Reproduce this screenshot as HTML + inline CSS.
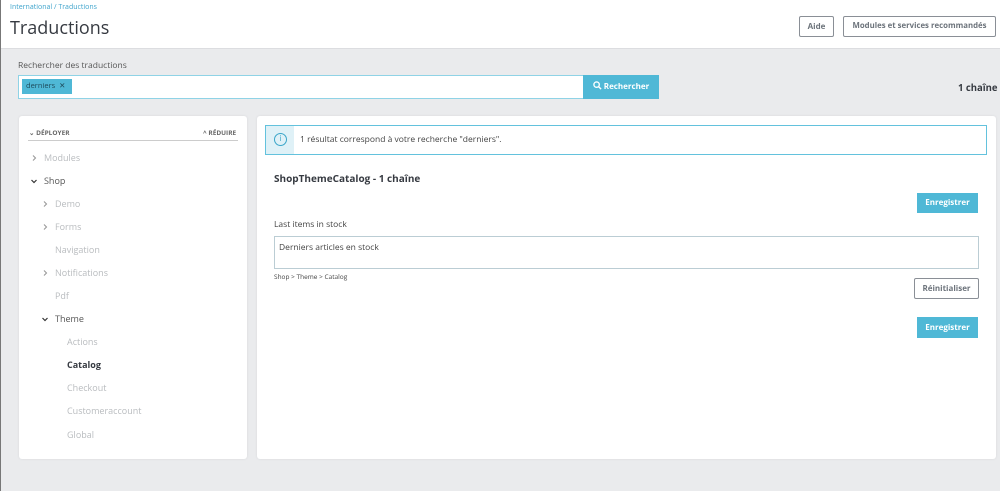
<!DOCTYPE html>
<html><head><meta charset="utf-8"><style>
*{box-sizing:border-box;margin:0;padding:0}
body{width:1000px;height:491px;background:#eaebed;font-family:"Open Sans","Liberation Sans",sans-serif;color:#363a41;position:relative;overflow:hidden;font-size:9px}
.a{position:absolute}
.hdr{left:0;top:0;width:1000px;height:49px;background:#fff;border-bottom:1px solid #dcdde0}
.edge{left:0;top:0;width:1px;height:491px;background:#777}
.btn{position:absolute;border:1px solid #8a8f96;border-radius:2px;background:#fff;color:#6c737b;font-weight:bold;font-size:8px;text-align:center;white-space:nowrap}
.blue{position:absolute;background:#4fb8d6;color:#fff;font-weight:bold;font-size:8px;text-align:center}
.panel{background:#fff;border-radius:3px;box-shadow:0 0 2px #d6d7da}
.t{position:absolute;color:#b9bcbf;font-size:9px;white-space:nowrap}
svg.c{position:absolute;width:6px;height:6px}
</style></head><body>
<div class="a hdr"></div>
<div class="a edge"></div>
<div class="a" style="left:10px;top:3px;color:#3fa4cc;font-size:7px">International / Traductions</div>
<div class="a" style="left:10px;top:16px;font-size:18px;color:#363a41">Traductions</div>
<div class="btn" style="left:799px;top:16px;width:35px;height:21px;line-height:19px">Aide</div>
<div class="btn" style="left:843px;top:16px;width:153px;height:21px;line-height:19px;font-size:7.8px">Modules et services recommandés</div>

<div class="a" style="left:18px;top:60px;font-size:8.5px;color:#555">Rechercher des traductions</div>
<div class="a" style="left:18px;top:75px;width:566px;height:24px;background:#fff;border:1px solid #8fd3e6"></div>
<div class="a" style="left:22px;top:79px;width:50px;height:15px;background:#4fb8d6;color:#1e4a5a;font-size:7.5px;line-height:15px;padding-left:4px">derniers &nbsp;✕</div>
<div class="blue" style="left:583px;top:75px;width:76px;height:24px;line-height:24px"><svg width="9" height="9" viewBox="0 0 10 10" style="vertical-align:-1px"><circle cx="4" cy="4" r="3" fill="none" stroke="#fff" stroke-width="1.5"/><path d="M6.2 6.2L9 9" stroke="#fff" stroke-width="1.6"/></svg> Rechercher</div>
<div class="a" style="left:958px;top:81px;font-weight:bold;font-size:9.5px;color:#363a41">1 chaîne</div>

<div class="a panel" style="left:19px;top:116px;width:228px;height:343px"></div>
<div class="a" style="left:29px;top:128px;font-size:6.5px;font-weight:bold;color:#666">⌄ DÉPLOYER</div>
<div class="a" style="left:203px;top:128px;font-size:6.5px;font-weight:bold;color:#666">^ RÉDUIRE</div>
<div class="a" style="left:28px;top:140px;width:210px;height:1px;background:#ccc"></div>
<svg class="c" style="left:31px;top:155px" viewBox="0 0 6 6"><path d="M2 0.5L4.5 3L2 5.5" fill="none" stroke="#999" stroke-width="1.1"/></svg><div class="t" style="left:44px;top:151px">Modules</div>
<svg class="c" style="left:31px;top:178px" viewBox="0 0 6 6"><path d="M0.5 2L3 4.5L5.5 2" fill="none" stroke="#333" stroke-width="1.2"/></svg><div class="t" style="left:44px;top:174px;color:#555">Shop</div>
<svg class="c" style="left:42px;top:201px" viewBox="0 0 6 6"><path d="M2 0.5L4.5 3L2 5.5" fill="none" stroke="#999" stroke-width="1.1"/></svg><div class="t" style="left:55px;top:197px">Demo</div>
<svg class="c" style="left:42px;top:224px" viewBox="0 0 6 6"><path d="M2 0.5L4.5 3L2 5.5" fill="none" stroke="#999" stroke-width="1.1"/></svg><div class="t" style="left:55px;top:220px">Forms</div>
<div class="t" style="left:55px;top:243px">Navigation</div>
<svg class="c" style="left:42px;top:270px" viewBox="0 0 6 6"><path d="M2 0.5L4.5 3L2 5.5" fill="none" stroke="#999" stroke-width="1.1"/></svg><div class="t" style="left:55px;top:266px">Notifications</div>
<div class="t" style="left:55px;top:289px">Pdf</div>
<svg class="c" style="left:42px;top:316px" viewBox="0 0 6 6"><path d="M0.5 2L3 4.5L5.5 2" fill="none" stroke="#333" stroke-width="1.2"/></svg><div class="t" style="left:55px;top:312px;color:#555">Theme</div>
<div class="t" style="left:67px;top:335px">Actions</div>
<div class="t" style="left:67px;top:358px;color:#363a41;font-weight:bold">Catalog</div>
<div class="t" style="left:67px;top:381px">Checkout</div>
<div class="t" style="left:67px;top:404px">Customeraccount</div>
<div class="t" style="left:67px;top:428px">Global</div>

<div class="a panel" style="left:257px;top:116px;width:739px;height:343px"></div>
<div class="a" style="left:265px;top:125px;width:722px;height:30px;border:1px solid #63c2dd;background:#fff"></div>
<div class="a" style="left:266px;top:126px;width:28px;height:28px;background:#dff1f7"></div>
<div class="a" style="left:274px;top:133px;width:13px;height:13px;border:1.3px solid #3aa6c9;border-radius:50%;color:#3aa6c9;font-size:8px;line-height:10px;text-align:center">i</div>
<div class="a" style="left:300px;top:134px;font-size:8.5px;color:#444">1 résultat correspond à votre recherche "derniers".</div>
<div class="a" style="left:274px;top:171px;font-size:10px;font-weight:bold;color:#363a41">ShopThemeCatalog - 1 chaîne</div>
<div class="blue" style="left:917px;top:193px;width:61px;height:20px;line-height:20px">Enregistrer</div>
<div class="a" style="left:274px;top:219px;font-size:8.5px;color:#444">Last items in stock</div>
<div class="a" style="left:274px;top:236px;width:705px;height:33px;border:1px solid #bbcdd4;background:#fff;padding:5px 4px;font-size:8.5px;color:#444">Derniers articles en stock</div>
<div class="a" style="left:274px;top:272px;font-size:6.5px;color:#444">Shop &gt; Theme &gt; Catalog</div>
<div class="btn" style="left:914px;top:278px;width:65px;height:21px;line-height:19px">Réinitialiser</div>
<div class="blue" style="left:917px;top:317px;width:61px;height:21px;line-height:21px">Enregistrer</div>
</body></html>
